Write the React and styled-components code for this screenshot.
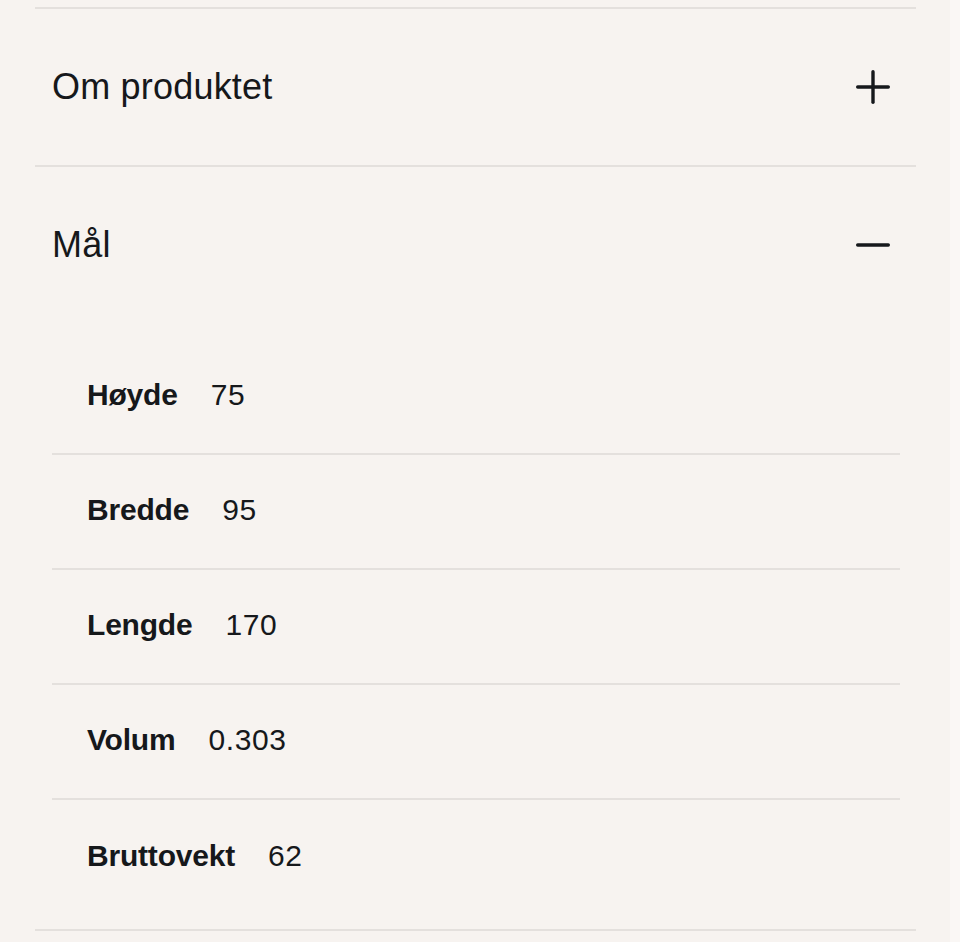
import React, { useState } from "react";
import styled, { createGlobalStyle } from "styled-components";

const Global = createGlobalStyle`
  html, body { margin: 0; padding: 0; background: #faf7f5; }
  body { font-family: "Liberation Sans", Arial, sans-serif; color: #16181b; }
`;

const Page = styled.div`
  width: 950px;
  min-height: 942px;
  box-sizing: border-box;
  background: #f7f3f0;
  padding: 7px 34px 0 35px;
`;

const Section = styled.section`
  border-top: 2px solid #e4e0dd;
  &:last-child { border-bottom: 2px solid #e4e0dd; }
`;

const Header = styled.button`
  all: unset;
  box-sizing: border-box;
  width: 100%;
  height: 156px;
  display: flex;
  align-items: center;
  justify-content: space-between;
  padding: 0 26px 0 17px;
  cursor: pointer;
`;

const Title = styled.span`
  font-size: 36px;
  font-weight: 400;
  letter-spacing: 0.2px;
  color: #16181b;
`;

const Icon = styled.svg`
  width: 34px;
  height: 34px;
  display: block;
`;

const Body = styled.div`
  padding: 17px 16px 14px 17px;
`;

const Row = styled.div`
  box-sizing: border-box;
  display: flex;
  align-items: center;
  gap: 33px;
  height: 115px;
  padding: 0 0 4px 35px;
  font-size: 30px;
  border-bottom: 2px solid #e4e0dd;
  &:last-child { border-bottom: none; }
`;

const Label = styled.span`
  font-weight: 700;
  letter-spacing: -0.2px;
`;

const Value = styled.span`
  font-weight: 400;
  letter-spacing: 0.6px;
`;

const PlusMinus = ({ open }) => (
  <Icon viewBox="0 0 34 34" fill="none" stroke="#16181b" strokeWidth="3.4" strokeLinecap="round">
    <line x1="1.7" y1="17" x2="32.3" y2="17" />
    {!open && <line x1="17" y1="1.7" x2="17" y2="32.3" />}
  </Icon>
);

const specs = [
  ["Høyde", "75"],
  ["Bredde", "95"],
  ["Lengde", "170"],
  ["Volum", "0.303"],
  ["Bruttovekt", "62"],
];

export default function App() {
  const [open, setOpen] = useState({ om: false, mal: true });
  return (
    <>
      <Global />
      <Page>
        <Section>
          <Header onClick={() => setOpen((o) => ({ ...o, om: !o.om }))}>
            <Title>Om produktet</Title>
            <PlusMinus open={open.om} />
          </Header>
        </Section>
        <Section>
          <Header onClick={() => setOpen((o) => ({ ...o, mal: !o.mal }))}>
            <Title>Mål</Title>
            <PlusMinus open={open.mal} />
          </Header>
          {open.mal && (
            <Body>
              {specs.map(([k, v]) => (
                <Row key={k}>
                  <Label>{k}</Label>
                  <Value>{v}</Value>
                </Row>
              ))}
            </Body>
          )}
        </Section>
      </Page>
    </>
  );
}
